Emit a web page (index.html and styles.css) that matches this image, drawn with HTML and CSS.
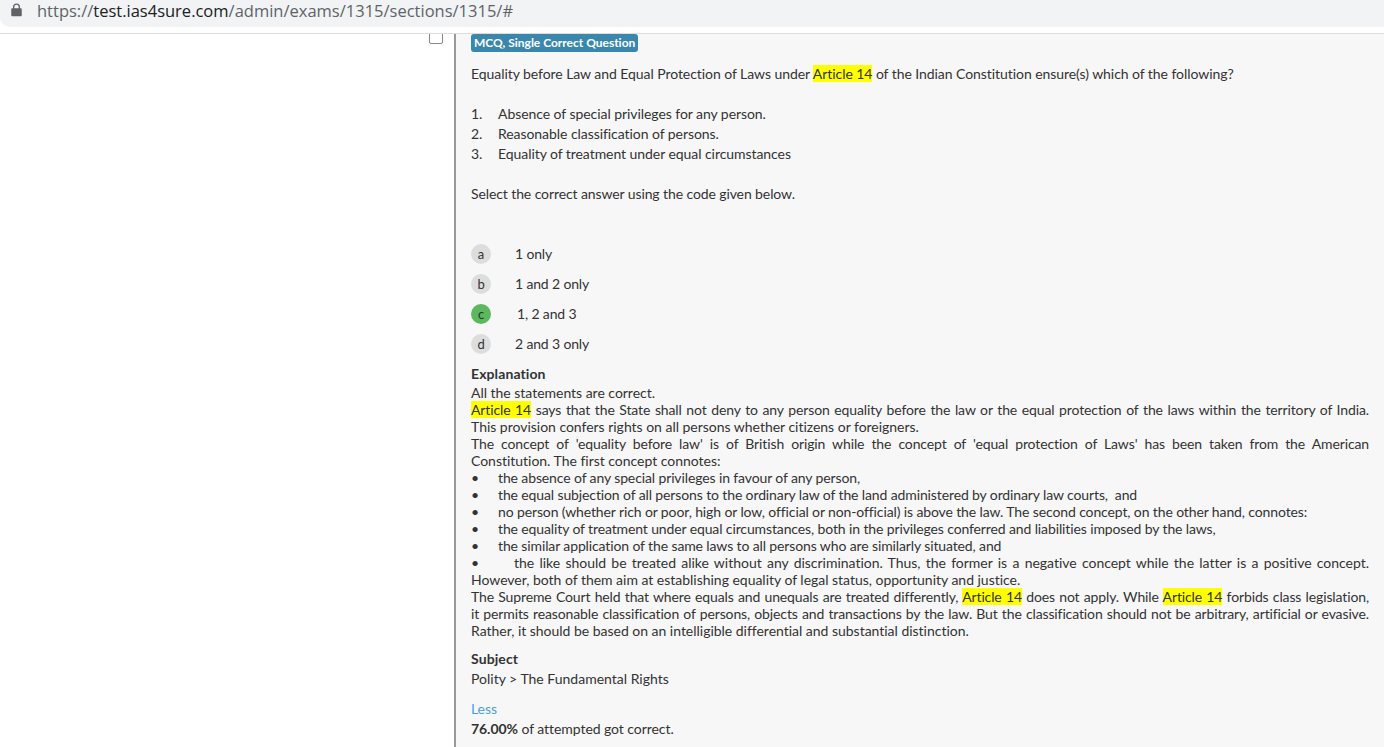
FILE: index.html
```html
<!DOCTYPE html>
<html lang="en">
<head>
<meta charset="utf-8">
<title>Exam section</title>
<link rel="stylesheet" href="styles.css">
</head>
<body>
<header class="urlbar">
  <div class="omnibox">
    <svg class="lock" viewBox="0 0 12 16" width="11" height="14"><path fill="#5f6368" d="M2 6V4.5a4 4 0 0 1 8 0V6h1a1 1 0 0 1 1 1v7a1 1 0 0 1-1 1H1a1 1 0 0 1-1-1V7a1 1 0 0 1 1-1h1zm1.5 0h5V4.5a2.5 2.5 0 0 0-5 0V6z"/></svg>
    <span class="url"><span class="dim">https://</span>test.ias4sure.com<span class="dim">/admin/exams/1315/sections/1315/#</span></span>
  </div>
</header>
<div class="page">
  <aside class="side"><span class="check"></span></aside>
  <main class="main">
    <div class="tag-row"><span class="tag">MCQ, Single Correct Question</span></div>
    <p class="q">Equality before Law and Equal Protection of Laws under <mark>Article 14</mark> of the Indian Constitution ensure(s) which of the following?</p>
    <ol class="stmts">
      <li>Absence of special privileges for any person.</li>
      <li>Reasonable classification of persons.</li>
      <li>Equality of treatment under equal circumstances</li>
    </ol>
    <p class="q select">Select the correct answer using the code given below.</p>
    <div class="options">
      <div class="opt"><span class="badge">a</span><span class="opt-text">1 only</span></div>
      <div class="opt"><span class="badge">b</span><span class="opt-text">1 and 2 only</span></div>
      <div class="opt"><span class="badge ok">c</span><span class="opt-text correct">1, 2 and 3</span></div>
      <div class="opt"><span class="badge">d</span><span class="opt-text">2 and 3 only</span></div>
    </div>
    <h4 class="head">Explanation</h4>
    <div class="expl">
      <p>All the statements are correct.</p>
      <p><span class="jl"><mark>Article 14</mark> says that the State shall not deny to any person equality before the law or the equal protection of the laws within the territory of India.</span> This provision confers rights on all persons whether citizens or foreigners.</p>
      <p><span class="jl">The concept of 'equality before law' is of British origin while the concept of 'equal protection of Laws' has been taken from the American</span> Constitution. The first concept connotes:</p>
      <p class="bul"><span>•</span>the absence of any special privileges in favour of any person,</p>
      <p class="bul"><span>•</span>the equal subjection of all persons to the ordinary law of the land administered by ordinary law courts,&nbsp; and</p>
      <p class="bul"><span>•</span>no person (whether rich or poor, high or low, official or non-official) is above the law. The second concept, on the other hand, connotes:</p>
      <p class="bul"><span>•</span>the equality of treatment under equal circumstances, both in the privileges conferred and liabilities imposed by the laws,</p>
      <p class="bul"><span>•</span>the similar application of the same laws to all persons who are similarly situated, and</p>
      <p class="bul-wide"><span>•</span>the like should be treated alike without any discrimination. Thus, the former is a negative concept while the latter is a positive concept. However, both of them aim at establishing equality of legal status, opportunity and justice.</p>
      <p><span class="jl">The Supreme Court held that where equals and unequals are treated differently, <mark>Article 14</mark> does not apply. While <mark>Article 14</mark> forbids class legislation,</span> <span class="jl">it permits reasonable classification of persons, objects and transactions by the law. But the classification should not be arbitrary, artificial or evasive.</span> Rather, it should be based on an intelligible differential and substantial distinction.</p>
    </div>
    <h4 class="head subject">Subject</h4>
    <p class="q subj">Polity &gt; The Fundamental Rights</p>
    <a class="less" href="#">Less</a>
    <p class="q stat"><b>76.00%</b> of attempted got correct.</p>
  </main>
</div>
</body>
</html>
```
FILE: styles.css
```css
* { box-sizing: border-box; }
html, body { margin: 0; padding: 0; height: 747px; overflow: hidden; background: #fff; }
body { font-family: Lato, sans-serif; font-size: 14px; color: #333; letter-spacing: -0.06px; }
p, h4, ol { margin: 0; }

.urlbar { height: 34px; background: #fff; border-bottom: 1px solid #ddd; }
.omnibox { height: 27px; display: flex; align-items: center; background: #f1f3f4; padding: 0 0 7px 11px; border-bottom-left-radius: 10px; }
.lock { display: block; margin-right: 15px; }
.url { font-family: "Open Sans", sans-serif; font-size: 16.5px; color: #202124; letter-spacing: 0; }
.dim { color: #5f6368; }

.page { display: flex; height: 713px; }
.side { width: 454px; background: #fff; position: relative; overflow: hidden; }
.check { position: absolute; left: 429px; top: -4px; width: 14px; height: 14px; border: 1px solid #888; border-radius: 2px; background: #fff; }
.main { flex: 1; background: #f7f7f7; border-left: 2px solid #999; padding: 0 15px 0 15px; line-height: 20px; }

.tag-row { height: 18px; line-height: 18px; display: flex; }
.tag { background: #3a87ad; color: #fff; font-size: 12px; font-weight: 700; padding: 0 3px; border-radius: 3px; letter-spacing: -0.01px; }
.q { line-height: 20px; }
.tag-row + .q { margin-top: 12px; }
.stmts { list-style: none; counter-reset: s; padding: 0; margin-top: 20px; }
.stmts li { counter-increment: s; display: flex; height: 20px; }
.stmts li::before { content: counter(s) "."; width: 27px; }
.select { margin-top: 20px; letter-spacing: -0.1px; }

.options { margin-top: 40px; display: flex; flex-direction: column; gap: 10px; }
.opt { display: flex; align-items: center; height: 20px; }
.badge { width: 20px; height: 20px; border-radius: 50%; background: #ddd; display: flex; align-items: center; justify-content: center; font-size: 13px; line-height: 1; flex: none; }
.badge.ok { background: #5cb85c; }
.opt-text { margin-left: 24px; letter-spacing: -0.15px; }
.opt-text.correct { margin-left: 26px; }

.head { font-size: 14px; font-weight: 700; line-height: 20px; margin-top: 10px; letter-spacing: 0.1px; }
.expl { line-height: 17px; text-align: justify; letter-spacing: -0.02px; }
.expl p { margin: 0; }
.jl { display: block; text-align-last: justify; letter-spacing: -0.12px; }
.bul { letter-spacing: -0.12px; }
.bul span { display: inline-block; width: 27px; }
.bul-wide span { display: inline-block; width: 43px; }
.subject { margin-top: 10px; }
.subj { letter-spacing: 0; }
.less { display: block; color: #4a9ee0; text-decoration: none; margin-top: 10px; height: 20px; }
mark { background: #ff0; color: inherit; }
```
